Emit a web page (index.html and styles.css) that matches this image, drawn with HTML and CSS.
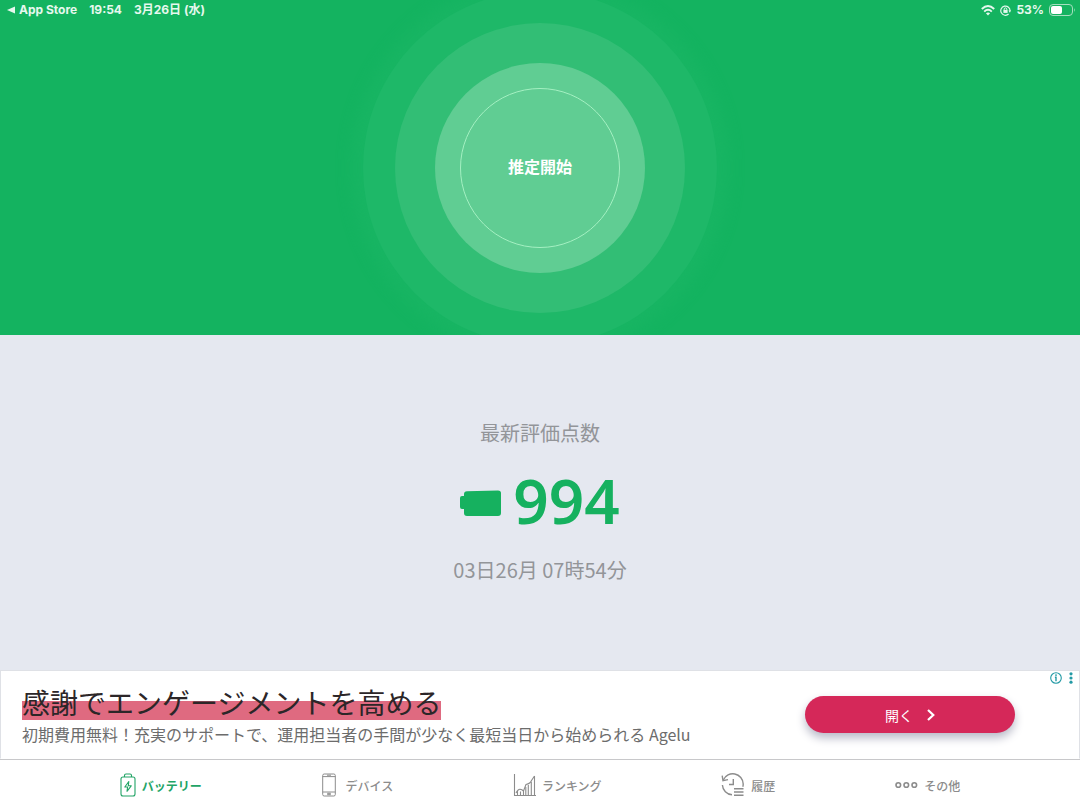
FILE: index.html
```
<!DOCTYPE html>
<html lang="ja">
<head>
    <meta charset="UTF-8">
    <meta name="viewport" content="width=device-width, initial-scale=1.0">
    <title>バッテリー</title>
    <link rel="stylesheet" href="styles.css">
</head>
<body>
    <header class="status-bar">
        <div class="status-group">
            <a class="back" href="#"><svg width="8" height="8" viewBox="0 0 8 8"><path d="M0 4 L8 0.5 V7.5 Z" fill="currentColor"/></svg>App Store</a>
            <span>19:54</span>
            <span>3月26日 (水)</span>
        </div>
        <div class="status-group right">
            <svg width="14" height="11" viewBox="0 0 14 11" fill="none" stroke="currentColor" stroke-width="1.9">
                <path d="M0.8 4 Q7 -1.8 13.2 4"/>
                <path d="M3.2 6.6 Q7 3 10.8 6.6"/>
                <path d="M7 10.5 L4.9 8.3 Q7 6.7 9.1 8.3 Z" fill="currentColor" stroke="none"/>
            </svg>
            <svg width="11" height="11" viewBox="0 0 11 11" fill="none" stroke="currentColor" stroke-width="1.2">
                <path d="M8.6 9 A4.6 4.6 0 1 1 10 6"/>
                <path d="M8.4 5.4 H11 L9.9 7.8 Z" fill="currentColor" stroke="none"/>
                <path d="M4.2 5 V4.2 A1.3 1.3 0 0 1 6.8 4.2 V5" stroke-width="1"/>
                <rect x="3.4" y="4.9" width="4.2" height="3" fill="currentColor" stroke="none"/>
            </svg>
            <span>53%</span>
            <svg width="27" height="12" viewBox="0 0 27 12">
                <rect x="0.5" y="0.5" width="23" height="11" rx="3.5" fill="none" stroke="#a5dfbf"/>
                <rect x="2" y="2" width="11" height="8" rx="2" fill="#fff"/>
                <path d="M25 4 Q26.6 6 25 8 Z" fill="#a5dfbf"/>
            </svg>
        </div>
    </header>

    <main class="content">
        <section class="hero">
            <button class="start" type="button"><span class="start-inner">推定開始</span></button>
        </section>

        <section class="score">
            <h1 class="score-title">最新評価点数</h1>
            <div class="score-row">
                <svg class="score-icon" width="41" height="27" viewBox="0 0 41 27" fill="#16b15f">
                    <path d="M7 1.2 L38 0.4 Q41 0.4 41 3 V23 Q41 26 38 26 H7 Q4 26 4 23 V19 H2 Q0 19 0 17 V8 Q0 6 2 6 H4 V4 Q4 1.4 7 1.2 Z"/>
                </svg>
                <span class="score-value">994</span>
            </div>
            <p class="score-date">03日26月 07時54分</p>
        </section>
    </main>

    <aside class="ad">
        <div class="ad-text">
            <h2 class="ad-title"><span>感謝でエンゲージメントを高める</span></h2>
            <p class="ad-desc">初期費用無料！充実のサポートで、運用担当者の手間が少なく最短当日から始められる Agelu</p>
        </div>
        <a class="ad-button" href="#">開く
            <svg width="8" height="12" viewBox="0 0 8 12" fill="none" stroke="currentColor" stroke-width="2.2"><path d="M1 1 L6.3 6 L1 11"/></svg>
        </a>
        <div class="ad-choices">
            <svg width="12" height="12" viewBox="0 0 12 12" fill="none" stroke="currentColor">
                <circle cx="6" cy="6" r="5.3" stroke-width="1.1"/>
                <path d="M6 5 V9.2 M4.9 5.2 H6.6" stroke-width="1.4"/>
                <circle cx="6" cy="3.1" r="0.9" fill="currentColor" stroke="none"/>
            </svg>
            <svg width="4" height="12" viewBox="0 0 4 12" fill="currentColor">
                <circle cx="2" cy="1.8" r="1.6"/><circle cx="2" cy="6" r="1.6"/><circle cx="2" cy="10.2" r="1.6"/>
            </svg>
        </div>
    </aside>

    <nav class="tabs">
        <a class="tab active" href="#">
            <svg width="16" height="24" viewBox="0 0 16 24" fill="none" stroke="currentColor" stroke-width="1.1" stroke-linejoin="round">
                <rect x="1" y="4" width="14" height="19" rx="2"/>
                <path d="M4.5 4 V2.5 Q4.5 1 6 1 H10 Q11.5 1 11.5 2.5 V4"/>
                <path d="M8.8 8.5 L4.8 14 H7.6 L7 18.3 L11.2 12.8 H8.3 Z"/>
            </svg>
            バッテリー
        </a>
        <a class="tab" href="#">
            <svg class="phone" width="14" height="24" viewBox="0 0 14 24" fill="none" stroke="currentColor" stroke-width="1">
                <rect x="0.7" y="1" width="12.6" height="22" rx="1.5"/>
                <path d="M0.7 3.6 H13.3 M0.7 19 H13.3 M5 2.2 H9"/>
                <rect x="5.8" y="20.3" width="2.4" height="1.4"/>
            </svg>
            デバイス
        </a>
        <a class="tab" href="#">
            <svg width="23" height="24" viewBox="0 0 23 24" fill="none" stroke="currentColor" stroke-width="1.1">
                <path d="M1.5 1 V22.5 H23"/>
                <path d="M3 20 Q5 16 7 16.2 T10.5 18 L13 11.5 Q17.5 10.5 18.5 7.5 L21.5 3"/>
                <path d="M4.5 22.5 V18 M7.5 22.5 V18.5 M10.5 22.5 V18 M12.8 22.5 V14 M15.3 22.5 V12 M18.3 22.5 V9 M21.5 22.5 V3"/>
            </svg>
            ランキング
        </a>
        <a class="tab" href="#">
            <svg width="24" height="24" viewBox="0 0 24 24" fill="none" stroke="currentColor" stroke-width="1.4">
                <path d="M2.3 7 A10.4 10.4 0 0 1 22.2 11 Q22.2 12.6 21.8 13.8"/>
                <path d="M1.2 2.6 L2 7.6 L7 6.6"/>
                <path d="M1.4 12 A10.4 10.4 0 0 0 11 21.8"/>
                <path d="M12.3 6 V11.5 H8"/>
                <path d="M13 15.8 H22.5 M13 19 H22.5 M13 22.2 H22.5"/>
            </svg>
            履歴
        </a>
        <a class="tab" href="#">
            <svg width="23" height="8" viewBox="0 0 23 8" fill="none" stroke="currentColor" stroke-width="1.6">
                <circle cx="3.3" cy="4" r="2.3"/><circle cx="11.3" cy="4" r="2.3"/><circle cx="19.3" cy="4" r="2.3"/>
            </svg>
            その他
        </a>
    </nav>
</body>
</html>
```
FILE: styles.css
```
* {
    box-sizing: border-box;
}
body {
    margin: 0;
    min-height: 100vh;
    display: flex;
    flex-direction: column;
    font-family: "Noto Sans CJK JP", sans-serif;
    background-color: #fff;
}
svg {
    flex: none;
}
h1, h2, p {
    margin: 0;
    font-weight: 400;
}
a {
    color: inherit;
    text-decoration: none;
}

/* status bar over the green area */
.status-bar {
    position: absolute;
    top: 0;
    left: 0;
    right: 0;
    z-index: 1;
    display: flex;
    justify-content: space-between;
    padding: 0 4px 0 7px;
    font: 700 12px/20px Inter, "Noto Sans CJK JP", sans-serif;
    color: #e6f8ee;
}
.status-group {
    display: flex;
    align-items: center;
    gap: 12px;
}
.status-group.right {
    gap: 5px;
}
.back {
    display: flex;
    align-items: center;
    gap: 4px;
}

.content {
    flex: 1;
    display: grid;
    grid-template-rows: 1fr 1fr;
}
.hero {
    display: flex;
    align-items: center;
    justify-content: center;
    overflow: hidden;
    background-color: #14b360;
}
.start {
    width: 210px;
    height: 210px;
    padding: 25px;
    border: none;
    border-radius: 50%;
    background-color: #60cd93;
    box-shadow: 0 0 0 40px #32be75, 0 0 0 72px #1eb868, 0 0 14px 84px #18b563;
    font: 700 16px/24px "Noto Sans CJK JP", sans-serif;
    color: #fff;
    cursor: pointer;
}
.start-inner {
    display: flex;
    align-items: center;
    justify-content: center;
    height: 100%;
    padding-bottom: 4px;
    border: 1px solid #a4f0c2;
    border-radius: 50%;
}

.score {
    display: flex;
    flex-direction: column;
    align-items: center;
    justify-content: center;
    padding-bottom: 4px;
    background-color: #e5e8f0;
    color: #939599;
}
.score-title {
    font-size: 20px;
    line-height: 30px;
}
.score-row {
    display: flex;
    align-items: center;
    gap: 12px;
    margin: 16px 0;
}
.score-icon {
    margin-top: 4px;
}
.score-value {
    padding-bottom: 4px;
    font: 600 62px/72px "Noto Sans", sans-serif;
    color: #16b15f;
}
.score-date {
    font-size: 20px;
    line-height: 28px;
}

.ad {
    position: relative;
    display: flex;
    align-items: center;
    justify-content: space-between;
    gap: 24px;
    height: 89px;
    padding: 0 64px 0 21px;
    border: 1px solid #dfe1e6;
    border-bottom-color: #fff;
}
.ad-title {
    font-size: 28px;
    line-height: 36px;
    color: #2c2628;
}
.ad-title span {
    display: inline-block;
    background: linear-gradient(transparent 17px, #df6a80 17px);
}
.ad-desc {
    padding-top: 2px;
    font-size: 16px;
    line-height: 24px;
    color: #6c6c6c;
}
.ad-button {
    display: flex;
    align-items: center;
    justify-content: center;
    gap: 14px;
    width: 210px;
    height: 37px;
    border-radius: 19px;
    background-color: #d52859;
    box-shadow: 0 5px 10px #b9bac8;
    font-size: 14px;
    color: #fff;
}
.ad-choices {
    position: absolute;
    top: 1px;
    right: 6px;
    display: flex;
    gap: 7px;
    color: #239aa5;
}

.tabs {
    display: flex;
    align-items: center;
    justify-content: space-evenly;
    height: 51px;
    border-top: 1px solid #c8c8ca;
    font-size: 12px;
    font-weight: 500;
    color: #8c8c8c;
}
.tab {
    display: flex;
    align-items: center;
    gap: 6px;
}
.phone {
    margin-right: 4px;
}
.tab.active {
    font-weight: 700;
    color: #22a466;
}
```
